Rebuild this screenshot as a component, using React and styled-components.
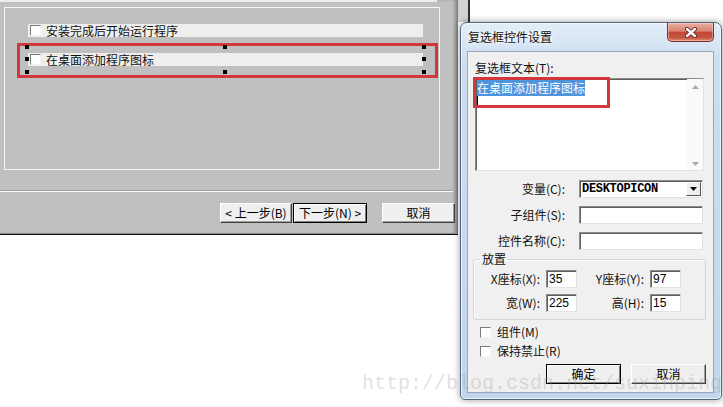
import React from 'react';
import styled, { createGlobalStyle } from 'styled-components';

const GlobalStyle = createGlobalStyle`
  html, body {
    margin: 0;
    padding: 0;
    background: #ffffff;
  }
  body {
    font-family: "Noto Sans CJK SC", "Liberation Sans", sans-serif;
    font-size: 12px;
    color: #000;
  }
`;

const Desktop = styled.div`
  position: relative;
  width: 723px;
  height: 407px;
  display: flex;
  align-items: flex-start;
  background: #ffffff;
  overflow: hidden;
`;

/* ---------- installer window (left) ---------- */

const InstallerWindow = styled.div`
  flex: none;
  width: 458px;
  height: 235px;
  box-sizing: border-box;
  display: flex;
  flex-direction: column;
  background: #c0c0c0;
  border-bottom: 1px solid #111;
  box-shadow: inset 0 -1px 0 #8a8a8a, inset -4px 0 4px -2px rgba(0, 0, 0, 0.45);
`;

const TopLight = styled.div`
  width: 437px;
  height: 2px;
  background: #ededed;
`;

const GroupPanel = styled.div`
  margin: 5px 0 0 4px;
  width: 436px;
  height: 163px;
  box-sizing: border-box;
  border: 1px solid #f6f6f6;
  padding-top: 16px;
  display: flex;
  flex-direction: column;
  align-items: flex-start;
`;

const OptionRow = styled.div`
  position: relative;
  width: 395px;
  height: 13px;
  margin-left: ${(p) => p.$indent || 0}px;
  padding-left: 2px;
  box-sizing: border-box;
  display: flex;
  align-items: center;
  gap: 5px;
  background: #eeeeee;
  font-size: 12px;
  line-height: 13px;
  color: #111;
`;

const ClassicBox = styled.span`
  flex: none;
  width: 11px;
  height: 11px;
  box-sizing: border-box;
  background: #fff;
  border: 1px solid;
  border-color: #7a7a7a #f4f4f4 #f4f4f4 #7a7a7a;
`;

const Annotation = styled.div`
  margin: 6px 0 0 12px;
  width: 421px;
  height: 35px;
  box-sizing: border-box;
  border: 3px solid #d2373c;
  padding: 7px 0 0 8px;
`;

const Handle = styled.span`
  position: absolute;
  width: 4px;
  height: 4px;
  background: #000;
  left: ${(p) => p.$x}px;
  top: ${(p) => p.$y}px;
`;

const Separator = styled.div`
  margin-top: 20px;
  width: 453px;
  border-top: 1px solid #a0a0a0;
  border-bottom: 1px solid #fafafa;
`;

const ButtonBar = styled.div`
  display: flex;
  margin-top: 11px;
  padding-left: 220px;
  gap: 1px;
`;

const WinButton = styled.button`
  width: ${(p) => p.$w}px;
  height: 20px;
  margin-left: ${(p) => p.$gap || 0}px;
  padding: 0;
  box-sizing: border-box;
  font-family: inherit;
  font-size: 12px;
  line-height: 16px;
  color: #000;
  background: #efefef;
  border: 1px solid;
  border-color: ${(p) => (p.$default ? '#000' : '#fff #404040 #404040 #fff')};
  box-shadow: ${(p) =>
    p.$default
      ? 'inset 1px 1px 0 #fff, inset -1px -1px 0 #808080'
      : 'inset -1px -1px 0 #a0a0a0'};
  white-space: nowrap;
`;

/* ---------- right side: dialog ---------- */

const RightSide = styled.div`
  flex: none;
  width: 265px;
  display: flex;
  flex-direction: column;
`;

const BehindStrip = styled.div`
  height: 22px;
  background: linear-gradient(to right, #d2d2d2 0 10px, #2e2e2e 10px 12px, #fff 12px);
`;

const Dialog = styled.div`
  margin-left: 2px;
  width: 262px;
  height: 378px;
  box-sizing: border-box;
  display: flex;
  flex-direction: column;
  padding: 0 7px 6px 6px;
  border: 1px solid #53667b;
  border-radius: 7px 7px 5px 5px;
  background: linear-gradient(180deg, #e3edf8 0%, #cddef1 10%, #c1d5ec 100%);
  box-shadow: inset 0 0 0 1px rgba(255, 255, 255, 0.65), 0 0 7px rgba(0, 0, 0, 0.4);
`;

const TitleBar = styled.div`
  height: 28px;
  flex: none;
  display: flex;
  align-items: flex-start;
  justify-content: space-between;
`;

const Title = styled.div`
  margin: 7px 0 0 1px;
  font-size: 12px;
  line-height: 14px;
  color: #111;
  text-shadow: 0 0 6px #fff, 0 0 3px #fff;
`;

const CloseButton = styled.div`
  width: 47px;
  height: 19px;
  box-sizing: border-box;
  display: flex;
  align-items: center;
  justify-content: center;
  border: 1px solid #7a2f2c;
  border-top: none;
  border-radius: 0 0 5px 5px;
  background: linear-gradient(180deg, #eab0a2 0%, #d8826f 45%, #c2463a 52%, #c4543f 80%, #dd8a72 100%);
  box-shadow: inset 0 0 0 1px rgba(255, 220, 210, 0.45);
`;

const Client = styled.div`
  flex: 1;
  display: flex;
  flex-direction: column;
  padding: 9px 7px 0 5px;
  background: #f0f0f0;
  border: 1px solid #97a8bd;
`;

const FieldLabel = styled.div`
  margin-left: 2px;
  font-size: 12px;
  line-height: 14px;
  color: #111;
`;

const TextBox = styled.div`
  position: relative;
  margin: 3px 0 0 2px;
  width: 229px;
  height: 93px;
  box-sizing: border-box;
  display: flex;
  background: #fff;
  border: 1px solid;
  border-color: #8c8c8c #e2e2e2 #e2e2e2 #8c8c8c;
  box-shadow: inset 1px 1px 0 #5e5e5e;
`;

const TextArea = styled.div`
  flex: 1;
  padding: 3px 0 0 1px;
  font-size: 12px;
  line-height: 12px;
`;

const Selected = styled.span`
  background: #4e95dd;
  color: #fff;
`;

const Caret = styled.div`
  margin-top: 1px;
  width: 1px;
  height: 12px;
  background: #000;
`;

const ScrollTrack = styled.div`
  width: 16px;
  display: flex;
  flex-direction: column;
  justify-content: space-between;
  align-items: center;
  padding: 6px 0 4px;
  background: #fafafa;
`;

const RedMark = styled.div`
  position: absolute;
  left: -3px;
  top: -2px;
  width: 137px;
  height: 31px;
  box-sizing: border-box;
  border: 3px solid #d2373c;
`;

const FormGrid = styled.div`
  margin: 9px 0 0 2px;
  display: grid;
  grid-template-columns: 90px 124px;
  column-gap: 14px;
  row-gap: 8px;
  align-items: center;
`;

const RowLabel = styled.div`
  text-align: right;
  font-size: 12px;
  line-height: 14px;
  color: #111;
  white-space: nowrap;
`;

const Field = styled.div`
  width: ${(p) => (p.$w ? `${p.$w}px` : 'auto')};
  height: 18px;
  box-sizing: border-box;
  display: flex;
  align-items: center;
  padding-left: 2px;
  background: #fff;
  border: 1px solid;
  border-color: #8c8c8c #e2e2e2 #e2e2e2 #8c8c8c;
  box-shadow: inset 1px 1px 0 #5e5e5e;
  font-family: "Liberation Sans", sans-serif;
  font-size: 12px;
  line-height: 16px;
`;

const ComboText = styled.span`
  flex: 1;
  font-family: "Liberation Mono", monospace;
  font-weight: bold;
  font-size: 12px;
  letter-spacing: -0.3px;
`;

const DropButton = styled.span`
  width: 15px;
  height: 14px;
  margin-right: 1px;
  box-sizing: border-box;
  display: flex;
  align-items: center;
  justify-content: center;
  background: #efefef;
  border: 1px solid;
  border-color: #fff #555 #555 #fff;
`;

const GroupBox = styled.fieldset`
  margin: 2px 0 0;
  padding: 4px 0 7px 0;
  border: 1px solid #d0d6dc;
  border-radius: 2px;
  box-shadow: inset 1px 1px 0 #fff;
`;

const Legend = styled.legend`
  margin-left: 6px;
  padding: 0 2px;
  font-size: 12px;
  line-height: 14px;
  color: #111;
`;

const PlaceGrid = styled.div`
  display: grid;
  grid-template-columns: 66px 31px 61px 31px;
  column-gap: 6px;
  row-gap: 6px;
  align-items: center;
`;

const CheckRow = styled.div`
  margin-top: ${(p) => p.$top}px;
  padding-left: 7px;
  display: flex;
  align-items: center;
  gap: 6px;
  font-size: 12px;
  line-height: 14px;
  color: #111;
`;

const DialogButtons = styled.div`
  margin-top: 6px;
  display: flex;
  justify-content: flex-end;
  gap: 10px;
`;

const Watermark = styled.div`
  position: absolute;
  left: 362px;
  top: 372px;
  font-family: "Liberation Mono", monospace;
  font-size: 20px;
  line-height: 24px;
  color: rgba(150, 150, 150, 0.3);
  white-space: nowrap;
  pointer-events: none;
`;

const handles = [
  [-3, -8], [195, -8], [394, -8],
  [-3, 4], [394, 4],
  [-3, 17], [195, 17], [394, 17],
];

const Arrow = ({ up }) => (
  <svg width="7" height="4" viewBox="0 0 7 4">
    <polygon points={up ? '0,4 3.5,0 7,4' : '0,0 3.5,4 7,0'} fill="#a9a9a9" />
  </svg>
);

const App = () => {
  return (
    <Desktop>
      <GlobalStyle />
      <InstallerWindow>
        <TopLight />
        <GroupPanel>
          <OptionRow $indent={23}>
            <ClassicBox />
            安装完成后开始运行程序
          </OptionRow>
          <Annotation>
            <OptionRow>
              <ClassicBox />
              在桌面添加程序图标
              {handles.map(([x, y]) => (
                <Handle key={`${x}-${y}`} $x={x} $y={y} />
              ))}
            </OptionRow>
          </Annotation>
        </GroupPanel>
        <Separator />
        <ButtonBar>
          <WinButton $w={72}>&lt; 上一步(B)</WinButton>
          <WinButton $w={74} $default>下一步(N) &gt;</WinButton>
          <WinButton $w={73} $gap={14}>取消</WinButton>
        </ButtonBar>
      </InstallerWindow>

      <RightSide>
        <BehindStrip />
        <Dialog>
          <TitleBar>
            <Title>复选框控件设置</Title>
            <CloseButton>
              <svg width="14" height="11" viewBox="0 0 14 11">
                <path d="M3 2 L11 9 M11 2 L3 9" stroke="#5a1d1a" strokeWidth="4" strokeLinecap="round" />
                <path d="M3 2 L11 9 M11 2 L3 9" stroke="#fff" strokeWidth="2.4" strokeLinecap="round" />
              </svg>
            </CloseButton>
          </TitleBar>
          <Client>
            <FieldLabel>复选框文本(T):</FieldLabel>
            <TextBox>
              <TextArea>
                <Selected>在桌面添加程序图标</Selected>
                <Caret />
              </TextArea>
              <ScrollTrack>
                <Arrow up />
                <Arrow />
              </ScrollTrack>
              <RedMark />
            </TextBox>

            <FormGrid>
              <RowLabel>变量(C):</RowLabel>
              <Field>
                <ComboText>DESKTOPICON</ComboText>
                <DropButton>
                  <svg width="7" height="4" viewBox="0 0 7 4">
                    <polygon points="0,0 3.5,4 7,0" fill="#000" />
                  </svg>
                </DropButton>
              </Field>
              <RowLabel>子组件(S):</RowLabel>
              <Field />
              <RowLabel>控件名称(C):</RowLabel>
              <Field />
            </FormGrid>

            <GroupBox>
              <Legend>放置</Legend>
              <PlaceGrid>
                <RowLabel>X座标(X):</RowLabel>
                <Field $w={31}>35</Field>
                <RowLabel>Y座标(Y):</RowLabel>
                <Field $w={31}>97</Field>
                <RowLabel>宽(W):</RowLabel>
                <Field $w={31}>225</Field>
                <RowLabel>高(H):</RowLabel>
                <Field $w={31}>15</Field>
              </PlaceGrid>
            </GroupBox>

            <CheckRow $top={5}>
              <ClassicBox />
              组件(M)
            </CheckRow>
            <CheckRow $top={5}>
              <ClassicBox />
              保持禁止(R)
            </CheckRow>

            <DialogButtons>
              <WinButton $w={75} $default>确定</WinButton>
              <WinButton $w={75}>取消</WinButton>
            </DialogButtons>
          </Client>
        </Dialog>
      </RightSide>

      <Watermark>http://blog.csdn.net/suxinpingtao51</Watermark>
    </Desktop>
  );
};

export default App;
